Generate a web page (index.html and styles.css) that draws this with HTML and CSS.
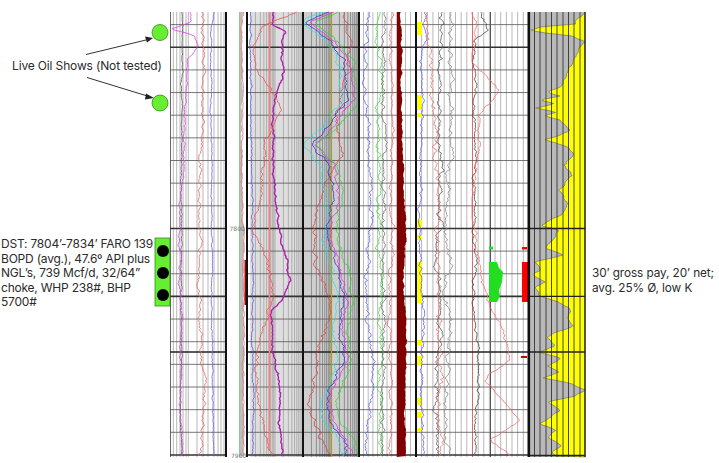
FILE: index.html
```html
<!DOCTYPE html>
<html lang="en">
<head>
<meta charset="utf-8">
<title>Well log – DST interval</title>
<link rel="stylesheet" href="styles.css">
</head>
<body>
<div class="figure">
  <svg class="log" id="log" width="719" height="463" viewBox="0 0 719 463" xmlns="http://www.w3.org/2000/svg">
    <g id="bg"></g>
    <g id="grid"></g>
    <g id="curves"></g>
    <g id="top"></g>
    <g class="callouts">
      <line class="arrow" x1="86" y1="54.5" x2="148" y2="39.5"/>
      <polygon class="arrowhead" points="153,38 145,36.5 147,42.5"/>
      <line class="arrow" x1="87" y1="77.5" x2="149" y2="96.5"/>
      <polygon class="arrowhead" points="154,98 146,93.5 145,99.5"/>
      <circle class="show" cx="160" cy="32.5" r="8"/>
      <circle class="show" cx="160" cy="103" r="8"/>
      <rect class="dst-box" x="155" y="238" width="15" height="68"/>
      <circle class="dst-dot" cx="163" cy="251" r="6"/>
      <circle class="dst-dot" cx="163" cy="273" r="6"/>
      <circle class="dst-dot" cx="163" cy="295" r="6"/>
      <text class="depth" x="229.5" y="230.5">7800</text>
      <text class="depth" x="231" y="458">7900</text>
    </g>
  </svg>
  <div class="note note-shows">Live Oil Shows (Not tested)</div>
  <div class="note note-dst">DST: 7804’-7834’ FARO 139<br>BOPD (avg.), 47.6º API plus<br>NGL’s, 739 Mcf/d, 32/64”<br>choke, WHP 238#, BHP<br>5700#</div>
  <div class="note note-pay">30’ gross pay, 20’ net;<br>avg. 25% Ø, low K</div>
</div>
<script src="log.js"></script>
</body>
</html>
```

FILE: styles.css
```css
html, body {
  margin: 0;
  padding: 0;
  background: #ffffff;
}
.figure {
  position: relative;
  width: 719px;
  height: 463px;
  overflow: hidden;
  font-family: Inter, "Noto Sans", "DejaVu Sans", sans-serif;
}
.log {
  display: block;
}
.note {
  position: absolute;
  font-size: 12px;
  line-height: 14.6px;
  color: #2b2b2b;
  white-space: nowrap;
}
.note-shows {
  left: 12px;
  top: 59px;
  letter-spacing: -0.15px;
}
.note-dst {
  left: 1px;
  top: 237px;
  letter-spacing: -0.22px;
}
.note-pay {
  left: 592px;
  top: 266px;
  font-size: 11.8px;
  line-height: 15px;
  letter-spacing: -0.1px;
}
.arrow {
  stroke: #333;
  stroke-width: 1;
}
.arrowhead {
  fill: #222;
}
.show {
  fill: #66ee33;
  stroke: #3a8a20;
  stroke-width: 0.8;
}
.dst-box {
  fill: #66ee33;
  stroke: #3a8a20;
  stroke-width: 0.8;
}
.dst-dot {
  fill: #000;
}
.depth {
  font-family: "DejaVu Sans", sans-serif;
  font-size: 6px;
  fill: #777;
}
```

FILE: log.js
```js
(function () {
  var NS = 'http://www.w3.org/2000/svg';
  var bg = document.getElementById('bg');
  var grid = document.getElementById('grid');
  var cv = document.getElementById('curves');
  var topL = document.getElementById('top');
  var TOP = 12, BOT = 457;

  function el(tag, attrs, parent) {
    var e = document.createElementNS(NS, tag);
    for (var k in attrs) e.setAttribute(k, attrs[k]);
    parent.appendChild(e);
    return e;
  }
  var seed = 98765;
  function rnd() {
    seed = (seed + 0x6D2B79F5) | 0;
    var t = Math.imul(seed ^ (seed >>> 15), 1 | seed);
    t = (t + Math.imul(t ^ (t >>> 7), 61 | t)) ^ t;
    return ((t ^ (t >>> 14)) >>> 0) / 4294967296;
  }
  function interp(keys, y) {
    if (y <= keys[0][0]) return keys[0][1];
    for (var i = 0; i < keys.length - 1; i++) {
      if (y <= keys[i + 1][0]) {
        var a = keys[i], b = keys[i + 1];
        return a[1] + (b[1] - a[1]) * (y - a[0]) / (b[0] - a[0]);
      }
    }
    return keys[keys.length - 1][1];
  }
  function series(n, s) {
    var arr = [], v = 0, m = 0, i;
    for (i = 0; i < n; i++) { v = v * s + (rnd() * 2 - 1); arr.push(v); }
    for (i = 0; i < n; i++) m = Math.max(m, Math.abs(arr[i]));
    for (i = 0; i < n; i++) arr[i] /= (m || 1);
    return arr;
  }
  var STEP = 1.5;
  var N = Math.floor((BOT - TOP) / STEP) + 1;
  function curveX(o) {
    var a = series(N, 0.92), b = series(N, 0.55), xs = [];
    for (var i = 0; i < N; i++) {
      var y = TOP + i * STEP;
      var x = interp(o.keys, y) + (o.off || 0) + o.amp * (0.75 * a[i] + 0.45 * b[i]);
      if (o.min != null) x = Math.max(o.min, x);
      if (o.max != null) x = Math.min(o.max, x);
      xs.push(x);
    }
    return xs;
  }
  function curve(o) {
    var xs = curveX(o), d = '';
    for (var i = 0; i < N; i++) {
      d += (i ? 'L' : 'M') + xs[i].toFixed(1) + ',' + (TOP + i * STEP).toFixed(1);
    }
    el('path', { d: d, fill: 'none', stroke: o.color, 'stroke-width': o.w || 0.8, 'stroke-linejoin': 'round' }, o.layer || cv);
  }
  function fillTo(o) {
    var xs = curveX(o), d = 'M' + o.base + ',' + TOP;
    for (var i = 0; i < N; i++) d += 'L' + xs[i].toFixed(1) + ',' + (TOP + i * STEP).toFixed(1);
    d += 'L' + o.base + ',' + BOT + 'Z';
    el('path', { d: d, fill: o.color, stroke: o.stroke || 'none', 'stroke-width': 0.6 }, o.layer || cv);
  }
  function rect(x, y, w, h, fill, parent) {
    el('rect', { x: x, y: y, width: w, height: h, fill: fill }, parent || bg);
  }
  function vline(x, color, w, parent, y1, y2) {
    el('line', { x1: x, y1: y1 || TOP, x2: x, y2: y2 || BOT, stroke: color, 'stroke-width': w }, parent || grid);
  }
  function hline(y, x1, x2, color, w, parent) {
    el('line', { x1: x1, y1: y, x2: x2, y2: y, stroke: color, 'stroke-width': w }, parent || grid);
  }
  function logLines(x0, width, decades, color, w) {
    for (var d = 0; d < decades; d++) {
      for (var k = 2; k <= 9; k++) vline(x0 + d * width + width * Math.log10(k), color, w);
      if (d > 0) vline(x0 + d * width, color, w);
    }
  }

  /* ---------- backgrounds ---------- */
  rect(250, TOP, 50, BOT - TOP, '#dedede');
  rect(303, TOP, 56, BOT - TOP, '#cfcfcf');
  rect(529, TOP, 56, BOT - TOP, '#b9b9b9');

  /* ---------- vertical grid ---------- */
  [173.3, 176.7, 180, 183, 186, 188.3, 197, 203, 208, 214, 218, 221, 224].forEach(function (x) { vline(x, '#9a9a9a', 0.7); });
  vline(170.5, '#555', 0.9);
  logLines(247, 28, 2, '#a8a8a8', 0.9);
  logLines(303, 28, 2, '#8c8c8c', 1);
  for (var x = 363.5; x < 397; x += 4.7) vline(x, '#a0a0a0', 0.7);
  vline(405.5, '#a0a0a0', 0.7); vline(410.5, '#a0a0a0', 0.7);
  for (x = 421.6; x < 528; x += 5.65) vline(x, '#9a9a9a', 0.7);
  vline(472.5, '#e06a6a', 1);
  vline(490.5, '#555', 1);

  /* ---------- horizontal grid ---------- */
  var thick = { 1: 1, 9: 1, 12: 1, 19: 1 };
  for (var k = 0; k < 20; k++) {
    var y = 24.6 + 22.65 * k;
    var t = thick[k] ? 1.6 : 0.8, c = thick[k] ? '#333' : '#555';
    hline(y, 170, 226, c, t);
    hline(y, 247, 528, c, t);
  }
  hline(352, 170, 226, '#222', 1.6);
  hline(352, 247, 528, '#222', 1.6);

  /* ---------- track A curves ---------- */
  curve({ keys: [[12, 182], [458, 181]], amp: 1.5, color: '#555', min: 176, max: 187 });
  curve({ keys: [[12, 191], [22, 192], [29, 172], [35, 194], [45, 199], [60, 188], [120, 185], [200, 182], [250, 179], [300, 181], [350, 180], [458, 182]], amp: 3, color: '#e040e0', min: 171, max: 200 });
  curve({ keys: [[12, 203], [100, 204], [200, 201], [300, 199], [400, 203], [458, 200]], amp: 5, color: '#f06060', min: 192, max: 214 });
  curve({ keys: [[12, 214], [30, 211], [458, 213]], amp: 1.5, color: '#6060f0', min: 208, max: 218 });

  /* ---------- gray strip + track B ---------- */
  fillTo({ base: 239, keys: [[12, 244], [30, 241], [100, 243], [200, 242], [300, 244], [458, 243]], amp: 2, color: '#bdbdbd', min: 240, max: 246.5 });
  vline(239.5, '#88cc88', 1, cv);
  curve({ keys: [[12, 244], [30, 241], [100, 243], [200, 242], [300, 244], [458, 243]], amp: 2.5, color: '#f07070', min: 239.5, max: 246.5 });
  rect(244.5, 260, 3, 45, '#a00000', cv);

  curve({ keys: [[12, 251], [458, 253]], amp: 2, color: '#5050e0', min: 248, max: 258 });
  vline(269.5, '#ff8080', 1.5, cv, TOP, 450);
  curve({ keys: [[12, 273], [25, 273], [32, 287], [40, 282], [70, 282], [110, 272], [200, 275], [240, 280], [260, 287], [280, 290], [300, 284], [310, 272], [350, 272], [380, 280], [458, 282]], amp: 3, color: '#b020b0', w: 1.4, min: 262, max: 298 });
  curve({ keys: [[12, 295], [25, 265], [45, 255], [70, 258], [90, 270], [110, 282], [140, 262], [200, 258], [230, 253], [260, 268], [300, 275], [330, 262], [360, 258], [400, 255], [430, 262], [458, 270]], amp: 5, color: '#e85050', min: 248, max: 302 });

  /* ---------- track C ---------- */
  var G = [[12, 330], [22, 308], [40, 330], [60, 345], [100, 350], [130, 325], [145, 310], [165, 330], [200, 335], [240, 330], [270, 340], [300, 345], [330, 340], [360, 345], [400, 328], [420, 330], [440, 345], [458, 350]];
  vline(331.5, '#a8a020', 1.2, cv);
  curve({ keys: [[12, 345], [40, 352], [80, 345], [120, 335], [160, 340], [200, 320], [250, 310], [300, 330], [350, 318], [400, 308], [430, 320], [458, 330]], amp: 6, color: '#e04040', min: 303, max: 358 });
  curve({ keys: G, off: -7, amp: 5, color: '#30e0e0', min: 304, max: 358 });
  curve({ keys: G, off: -2, amp: 5, color: '#3030e0', min: 304, max: 358 });
  curve({ keys: G, off: 3, amp: 5, color: '#e030e0', min: 304, max: 358 });
  curve({ keys: G, off: 8, amp: 5, color: '#30d030', min: 304, max: 358 });

  /* ---------- track D ---------- */
  curve({ keys: [[12, 368], [100, 365], [200, 372], [300, 367], [400, 372], [458, 368]], amp: 5, color: '#6060f0', min: 360, max: 396 });
  curve({ keys: [[12, 378], [458, 380]], amp: 6, color: '#40e040', min: 360, max: 396 });
  curve({ keys: [[12, 385], [458, 383]], amp: 5, color: '#707070', min: 360, max: 396 });
  curve({ keys: [[12, 392], [458, 390]], amp: 4, color: '#f06060', min: 360, max: 396 });

  /* ---------- maroon fill ---------- */
  fillTo({ base: 397, keys: [[12, 400.5], [100, 401.5], [200, 404], [230, 406], [270, 403], [300, 404], [340, 407], [400, 405], [458, 406]], amp: 2, color: '#800000', min: 398, max: 409 });

  /* ---------- track F ---------- */
  [[22, 13], [95, 15], [113, 4], [220, 8], [235, 5], [262, 41], [340, 5], [356, 9], [398, 7], [412, 6], [428, 4]].forEach(function (b) { rect(417, b[0], 5, b[1], '#ffff00', cv); });
  curve({ keys: [[12, 425], [100, 422], [200, 420], [300, 421], [458, 422]], amp: 4, color: '#6060f0', min: 417, max: 445 });
  curve({ keys: [[12, 440], [458, 437]], amp: 6, color: '#555', min: 418, max: 466 });
  curve({ keys: [[12, 452], [458, 445]], amp: 6, color: '#8a8a8a', min: 418, max: 466 });
  curve({ keys: [[12, 428], [60, 430], [200, 440], [458, 438]], amp: 6, color: '#f07070', min: 418, max: 466 });
  el('path', { d: 'M489,262 L497,262 L499,268 L503,272 L502,282 L499,290 L500,296 L497,302 L489,302 Z', fill: '#22dd22' }, cv);
  rect(489, 246.5, 4, 3, '#22dd22', cv);
  curve({ keys: [[12, 480], [30, 488], [40, 474], [100, 476], [240, 474], [260, 478], [300, 473], [340, 478], [400, 476], [458, 475]], amp: 4, color: '#444', min: 472, max: 500 });
  curve({ keys: [[12, 473], [40, 475], [60, 470], [90, 500], [115, 480], [200, 473], [240, 476], [280, 480], [300, 486], [330, 505], [360, 510], [380, 485], [420, 520], [440, 490], [458, 512]], amp: 5, color: '#f07070', min: 472, max: 526 });
  rect(522, 262, 6, 40, '#ff0000', cv);
  rect(522, 247, 5, 2.5, '#ff0000', cv);
  rect(521, 356, 6, 2, '#cc0000', cv);

  /* ---------- track G (gray/yellow) ---------- */
  var Y = [[12, 585], [18, 578], [24, 575], [27, 540], [30, 530], [33, 545], [36, 572], [42, 585], [48, 578], [60, 574], [70, 568], [80, 565], [88, 558], [92, 548], [96, 560], [100, 540], [104, 555], [108, 535], [112, 556], [116, 545], [120, 560], [130, 570], [136, 558], [140, 545], [146, 566], [155, 575], [165, 565], [175, 572], [190, 560], [205, 568], [215, 560], [222, 548], [226, 540], [230, 560], [240, 552], [248, 545], [255, 562], [262, 535], [270, 540], [275, 532], [282, 545], [288, 535], [296, 540], [302, 560], [310, 572], [318, 565], [326, 575], [332, 556], [338, 548], [346, 555], [352, 540], [358, 560], [366, 548], [372, 560], [378, 545], [384, 572], [390, 585], [396, 575], [402, 548], [410, 560], [418, 550], [424, 540], [430, 555], [438, 548], [446, 562], [452, 552], [458, 560]];
  var ys = series(N, 0.5), d = 'M585,' + TOP;
  for (var i = 0; i < N; i++) {
    var yy = TOP + i * STEP;
    var xx = Math.max(529.5, Math.min(585, interp(Y, yy) + 2 * ys[i]));
    d += 'L' + xx.toFixed(1) + ',' + yy.toFixed(1);
  }
  d += 'L585,' + BOT + 'Z';
  el('path', { d: d, fill: '#ffff00', stroke: '#666', 'stroke-width': 0.6 }, cv);
  [534.5, 540, 546, 551.5, 557, 563, 568.5, 574, 580].forEach(function (x) { vline(x, '#333', 0.9, topL); });
  [228.5, 296.4, 352, 455.5].forEach(function (y) { hline(y, 529, 585, '#222', 1.4, topL); });

  /* ---------- track borders ---------- */
  [226, 247, 303, 359, 416, 528.5].forEach(function (x) { vline(x, '#111', 2, topL); });
  vline(529.5, '#111', 1.2, topL);
  vline(585, '#222', 1.4, topL);
})();
```
